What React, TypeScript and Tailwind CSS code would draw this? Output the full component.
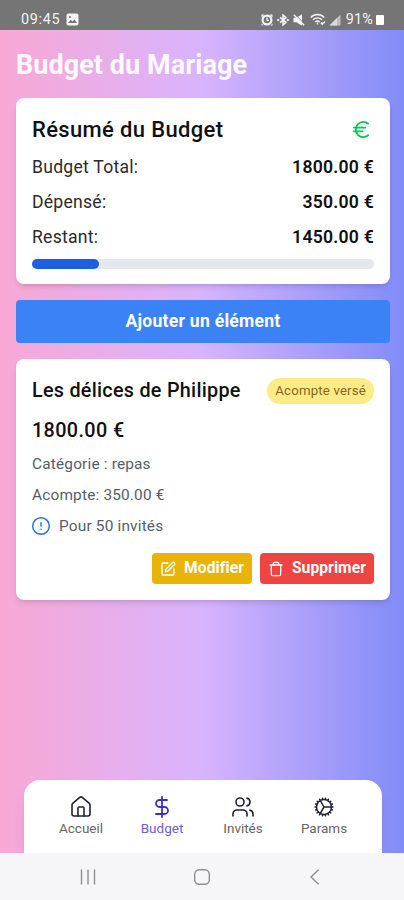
import type { ReactNode } from 'react';
import { CircleAlert, DollarSign, Euro, House, SquarePen, Trash, Users } from 'lucide-react';
import { HiOutlineCog } from 'react-icons/hi2';

interface BudgetItem {
  id: string;
  name: string;
  amount: number;
  category: string;
  deposit: number;
  guests: number;
}

const TOTAL = 1800;

const items: BudgetItem[] = [
  { id: '1', name: 'Les délices de Philippe', amount: 1800, category: 'repas', deposit: 350, guests: 50 },
];

const formatPrice = (value: number) => `${value.toFixed(2)} €`;

function StatusBar() {
  return (
    <div className="flex h-[30px] items-center justify-between bg-[#757575] pt-[9px] pr-[20px] pl-[21px] text-[14.4px] leading-none text-[#f4f4f4]">
      <div className="flex items-center gap-[6px]">
        <span className="pt-[2px] tracking-[0.7px]">09:45</span>
        <svg width="13" height="13" viewBox="0 0 13 13">
          <rect x="0.5" y="0.5" width="12" height="12" rx="2" fill="#f4f4f4" />
          <path d="M2 10l2.7-3.2 1.8 1.8 2-2L11 10z" fill="#757575" />
          <circle cx="4" cy="4" r="1" fill="#757575" />
        </svg>
      </div>
      <div className="flex items-center">
        {/* alarm */}
        <svg className="mr-[4px]" width="12" height="12" viewBox="0 0 12 12" fill="#f4f4f4">
          <path d="M0.5 0.5h3L0.5 3.5zM11.5 0.5h-3l3 3zM0.5 11.5v-2l2 2zM11.5 11.5v-2l-2 2z" />
          <circle cx="6" cy="6" r="5.5" />
          <circle cx="6" cy="6" r="3.3" fill="#757575" />
          <path d="M6 3.6V6.3H8" fill="none" stroke="#f4f4f4" strokeWidth="1.2" />
        </svg>
        {/* bluetooth */}
        <svg className="mr-[4px]" width="12" height="12" viewBox="0 0 12 12" fill="none" stroke="#f4f4f4" strokeWidth="1.5">
          <path d="M3 3.3l6 5-3 2.7V1l3 2.7-6 5" />
          <path d="M0.3 6h1.8M9.9 6h1.8" strokeWidth="2" />
        </svg>
        {/* sound off */}
        <svg className="mr-[5px]" width="12" height="12" viewBox="0 0 12 12">
          <path d="M0.5 3.8h3L9 0.3v11.4L3.5 8.2h-3z" fill="#f4f4f4" />
          <path d="M1.6 0l10 10" stroke="#757575" strokeWidth="1" />
          <path d="M0.8 0.8l10.4 10.4" stroke="#f4f4f4" strokeWidth="1.4" />
        </svg>
        {/* wifi */}
        <svg className="mr-[3px]" width="16" height="13" viewBox="0 0 16 13" fill="none" stroke="#f4f4f4" strokeWidth="1.4">
          <path d="M0.8 4.5c3.6-4 9.8-4 13.4 0M3 6.8c2.5-2.6 6.6-2.6 9 0M5.2 9c1.3-1.4 3.3-1.4 4.6 0" />
          <path d="M7.5 9.5v2M11 9.5l1.2 1.8 1.2-1.8M13.8 10.2l1-1.7" />
        </svg>
        {/* signal */}
        <svg className="mr-[5px]" width="12" height="12" viewBox="0 0 12 12">
          <path d="M0.5 11.5L11.5 0.5V11.5z" fill="#bdbdbd" />
          <path d="M0.5 11.5L8 4v7.5z" fill="#dcdcdc" />
        </svg>
        <span className="pt-[2px] tracking-[0.2px]">91%</span>
        <span className="ml-[3px] h-[10px] w-[8px] rounded-[1px] bg-white" />
      </div>
    </div>
  );
}

function SummaryRow({ label, value }: { label: string; value: number }) {
  return (
    <div className="mb-[9px] flex h-[26px] items-center justify-between text-[17.6px] tracking-[0.24px]">
      <span className="text-[#2b2b2b]">{label}</span>
      <span className="font-semibold">{formatPrice(value)}</span>
    </div>
  );
}

function Summary({ spent }: { spent: number }) {
  // share of the budget already spent
  const percent = (spent / TOTAL) * 100;

  return (
    <div className="h-[186px] rounded-lg bg-white px-4 pt-4 shadow-md">
      <div className="mb-[9px] flex h-[31px] items-center justify-between">
        <h2 className="text-[22px] font-medium tracking-[0.35px]">Résumé du Budget</h2>
        <Euro className="mr-[1px] size-[23px] text-green-500" strokeWidth={1.8} />
      </div>
      <SummaryRow label="Budget Total:" value={TOTAL} />
      <SummaryRow label="Dépensé:" value={spent} />
      <SummaryRow label="Restant:" value={TOTAL - spent} />
      <div className="h-[10px] rounded-full bg-gray-200">
        <div className="h-full rounded-full bg-[#1d5fe0]" style={{ width: `${percent}%` }} />
      </div>
    </div>
  );
}

function ItemCard({ item }: { item: BudgetItem }) {
  return (
    <div className="h-[241px] rounded-lg bg-white px-4 pt-4 shadow-md">
      <div className="flex h-[31px] items-center justify-between">
        <h3 className="text-[19.8px] font-medium tracking-[0.27px]">{item.name}</h3>
        <span className="flex h-[26px] items-center rounded-full bg-[#fdec85] px-2 text-[13.2px] tracking-[0.2px] text-[#8a6426]">
          Acompte versé
        </span>
      </div>
      <p className="mt-[10px] h-[30px] text-[19.8px] leading-[30px] font-medium tracking-[0.38px]">{formatPrice(item.amount)}</p>
      <div className="mt-[7px] flex flex-col gap-[9px] text-[15.4px] leading-[22px] tracking-[0.18px] text-[#565d69]">
        <p>Catégorie : {item.category}</p>
        <p>Acompte: {formatPrice(item.deposit)}</p>
        <p className="flex items-center gap-2">
          <CircleAlert className="-ml-px size-[20px] text-[#2d73e0]" strokeWidth={1.8} />
          Pour {item.guests} invités
        </p>
      </div>
      <div className="mt-[16px] flex justify-end gap-2 text-[15.6px] font-bold tracking-[0.08px] text-white">
        <button className="flex h-[31px] items-center gap-2 rounded bg-[#eab308] px-2">
          <SquarePen className="size-[16px]" />
          Modifier
        </button>
        <button className="flex h-[31px] items-center gap-2 rounded bg-[#ef4444] px-2">
          <Trash className="size-[16px]" />
          Supprimer
        </button>
      </div>
    </div>
  );
}

function NavItem({ label, icon, active }: { label: string; icon: ReactNode; active?: boolean }) {
  return (
    <a className={`flex w-[81px] flex-col items-center ${active ? 'text-[#3b2fc9]' : 'text-[#1e2235]'}`}>
      {icon}
      <span className={`text-[13.5px] leading-[18px] ${active ? 'text-[#6a5fd8]' : 'text-[#666]'}`}>{label}</span>
    </a>
  );
}

function BottomNav() {
  return (
    <nav className="mr-[22px] ml-6 flex h-[73px] justify-center rounded-t-2xl bg-white pt-[15px] pr-px shadow-lg">
      <NavItem label="Accueil" icon={<House className="size-[24px]" strokeWidth={1.6} />} />
      <NavItem label="Budget" icon={<DollarSign className="size-[24px]" strokeWidth={1.8} />} active />
      <NavItem label="Invités" icon={<Users className="size-[24px]" strokeWidth={1.6} />} />
      <NavItem label="Params" icon={<HiOutlineCog className="size-[24px]" />} />
    </nav>
  );
}

function SystemNav() {
  return (
    <div className="flex h-[47px] items-center justify-center gap-[97.5px] bg-[#f6f6f8] pr-px">
      <svg width="16" height="16" viewBox="0 0 16 16" stroke="#8f8f8f" strokeWidth="1.4">
        <path d="M1.5 0.5v15M8 0.5v15M14.5 0.5v15" />
      </svg>
      <svg width="16" height="16" viewBox="0 0 16 16" fill="none" stroke="#8f8f8f" strokeWidth="1.4">
        <rect x="0.7" y="0.7" width="14.6" height="14.6" rx="4.5" />
      </svg>
      <svg width="16" height="16" viewBox="0 0 16 16" fill="none" stroke="#8f8f8f" strokeWidth="1.4">
        <path d="M11.5 0.7L4 8l7.5 7.3" />
      </svg>
    </div>
  );
}

export default function App() {
  const spent = items.reduce((sum, item) => sum + item.deposit, 0);

  return (
    <div className="flex h-[900px] w-[404px] flex-col overflow-hidden bg-linear-to-r/srgb from-[#f9a8d4] via-[#d8b4fe] to-[#818cf8] font-[Roboto,sans-serif] text-[#111]">
      <StatusBar />
      <main className="flex flex-1 flex-col gap-4 pr-[14px] pl-4">
        <h1 className="mt-[17px] h-[35px] text-[27px] leading-[37px] font-bold tracking-[0.06px] text-[#fff8ff]">Budget du Mariage</h1>
        <Summary spent={spent} />
        <button className="h-[43px] rounded bg-[#3b82f6] text-[17.6px] font-bold tracking-[0.24px] text-white">
          Ajouter un élément
        </button>
        {items.map(item => (
          <ItemCard key={item.id} item={item} />
        ))}
      </main>
      <BottomNav />
      <SystemNav />
    </div>
  );
}
